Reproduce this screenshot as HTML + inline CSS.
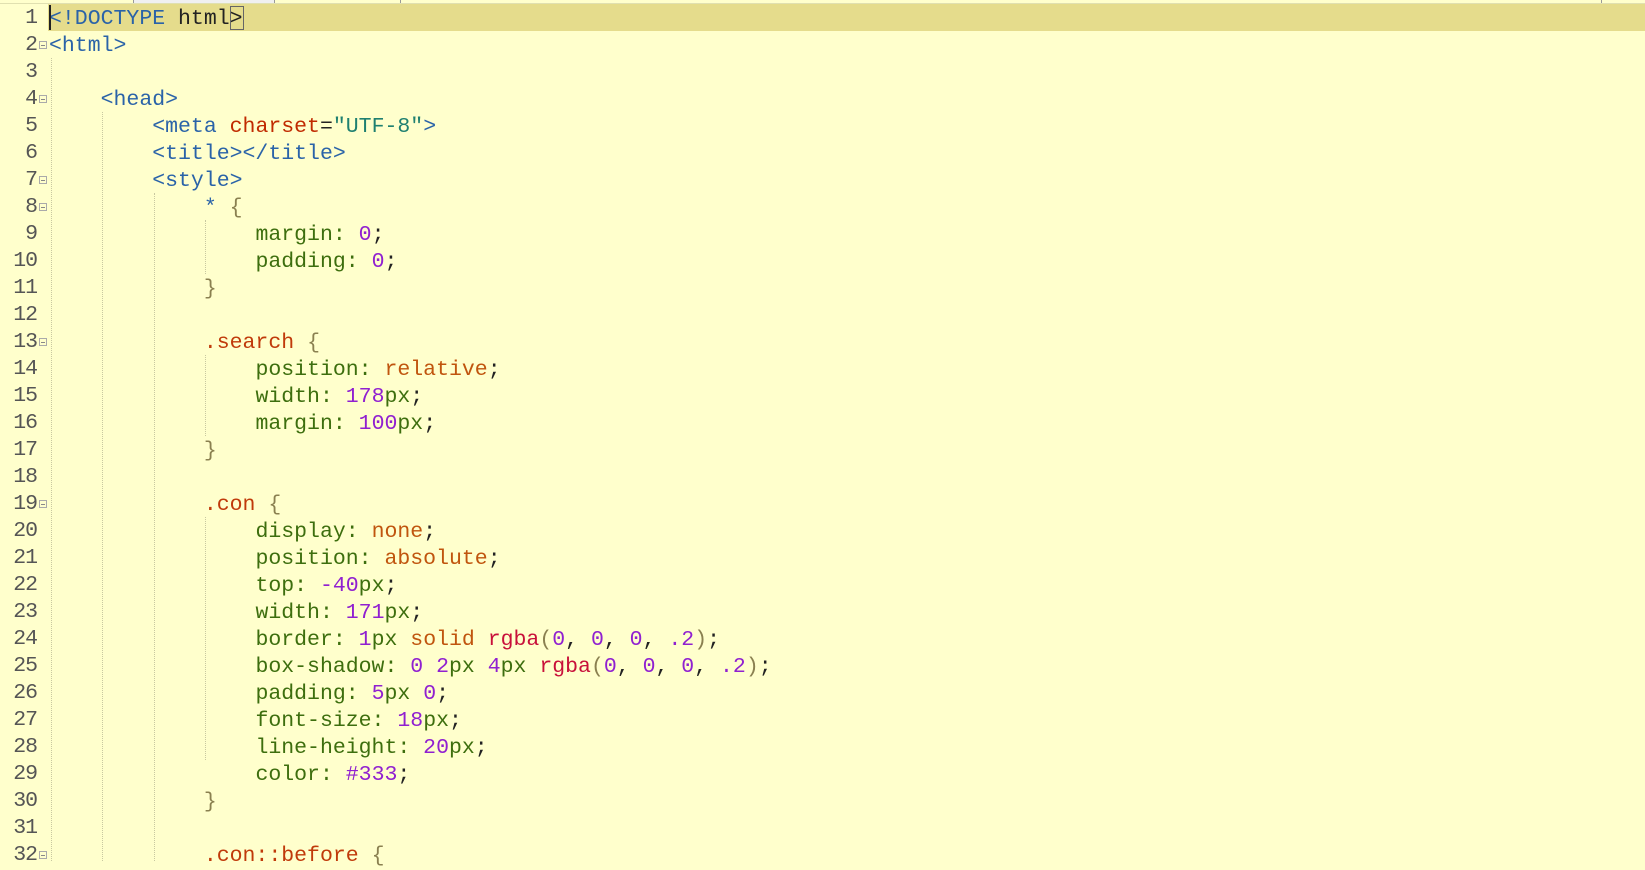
<!DOCTYPE html>
<html><head><meta charset="utf-8"><style>
html,body{margin:0;padding:0;width:1645px;height:861px;overflow:hidden;background:#ffffcc;}
.tabs{position:absolute;left:0;top:0;width:1645px;height:3px;background:#ffffcc;border-bottom:1px solid #e0e0b0;}
.tabs i{position:absolute;top:0;height:3px;border-left:1px solid #999;border-right:1px solid #999;background:#f0f0f0}
.hl{position:absolute;left:48px;top:4px;width:1597px;height:27px;background:#e5dc8c;}
.g{position:absolute;left:0;top:6px;width:48px;}
.g div,.c div{height:27px;line-height:27px;white-space:pre;}
.g div{text-align:right;padding-right:11px;color:#555;font:21.5px "Liberation Mono",monospace;letter-spacing:-1px;position:relative}
.f{position:absolute;right:1px;top:8px;width:8px;height:8px;border:1px solid #aaa;box-sizing:border-box}
.f:after{content:"";position:absolute;left:1px;top:3px;width:4px;height:1px;background:#888}
.c{position:absolute;left:49px;top:6px;font:21.5px "Liberation Mono",monospace;color:#222}
.ig{position:absolute;width:0;border-left:1px dotted #c8c8a0}
.t{color:#2a63a8}.a{color:#c02a00}.s{color:#1f8070}.p{color:#3d6e0e}.n{color:#9020d0}.k{color:#c0550e}.sel{color:#c03a0a}.b{color:#8a8050}.r{color:#c8103a}
.cur{position:absolute;left:49px;top:5px;width:2px;height:25px;background:#222}
.bm{position:absolute;left:230px;top:6px;width:14px;height:24px;border:1px solid #666;box-sizing:border-box}
</style></head><body>
<div class="tabs"><i style="left:133px;width:140px"></i><i style="left:400px;width:1200px;background:#ffffcc"></i></div>
<div class="hl"></div>
<div class="ig" style="left:51px;top:58px;height:803px"></div>
<div class="ig" style="left:102px;top:112px;height:749px"></div>
<div class="ig" style="left:154px;top:193px;height:668px"></div>
<div class="ig" style="left:205px;top:220px;height:54px"></div>
<div class="ig" style="left:205px;top:355px;height:81px"></div>
<div class="ig" style="left:205px;top:517px;height:243px"></div>
<div class="g">
<div>1</div><div>2<span class="f"></span></div><div>3</div><div>4<span class="f"></span></div><div>5</div><div>6</div><div>7<span class="f"></span></div><div>8<span class="f"></span></div><div>9</div><div>10</div><div>11</div><div>12</div><div>13<span class="f"></span></div><div>14</div><div>15</div><div>16</div><div>17</div><div>18</div><div>19<span class="f"></span></div><div>20</div><div>21</div><div>22</div><div>23</div><div>24</div><div>25</div><div>26</div><div>27</div><div>28</div><div>29</div><div>30</div><div>31</div><div>32<span class="f"></span></div>
</div>
<div class="c">
<div><span class="t">&lt;!DOCTYPE</span> html&gt;</div>
<div><span class="t">&lt;html&gt;</span></div>
<div> </div>
<div>    <span class="t">&lt;head&gt;</span></div>
<div>        <span class="t">&lt;meta</span> <span class="a">charset</span>=<span class="s">"UTF-8"</span><span class="t">&gt;</span></div>
<div>        <span class="t">&lt;title&gt;&lt;/title&gt;</span></div>
<div>        <span class="t">&lt;style&gt;</span></div>
<div>            <span class="t">*</span> <span class="b">{</span></div>
<div>                <span class="p">margin:</span> <span class="n">0</span>;</div>
<div>                <span class="p">padding:</span> <span class="n">0</span>;</div>
<div>            <span class="b">}</span></div>
<div> </div>
<div>            <span class="sel">.search</span> <span class="b">{</span></div>
<div>                <span class="p">position:</span> <span class="k">relative</span>;</div>
<div>                <span class="p">width:</span> <span class="n">178</span><span class="p">px</span>;</div>
<div>                <span class="p">margin:</span> <span class="n">100</span><span class="p">px</span>;</div>
<div>            <span class="b">}</span></div>
<div> </div>
<div>            <span class="sel">.con</span> <span class="b">{</span></div>
<div>                <span class="p">display:</span> <span class="k">none</span>;</div>
<div>                <span class="p">position:</span> <span class="k">absolute</span>;</div>
<div>                <span class="p">top:</span> <span class="n">-40</span><span class="p">px</span>;</div>
<div>                <span class="p">width:</span> <span class="n">171</span><span class="p">px</span>;</div>
<div>                <span class="p">border:</span> <span class="n">1</span><span class="p">px</span> <span class="k">solid</span> <span class="r">rgba</span><span class="b">(</span><span class="n">0</span>, <span class="n">0</span>, <span class="n">0</span>, <span class="n">.2</span><span class="b">)</span>;</div>
<div>                <span class="p">box-shadow:</span> <span class="n">0</span> <span class="n">2</span><span class="p">px</span> <span class="n">4</span><span class="p">px</span> <span class="r">rgba</span><span class="b">(</span><span class="n">0</span>, <span class="n">0</span>, <span class="n">0</span>, <span class="n">.2</span><span class="b">)</span>;</div>
<div>                <span class="p">padding:</span> <span class="n">5</span><span class="p">px</span> <span class="n">0</span>;</div>
<div>                <span class="p">font-size:</span> <span class="n">18</span><span class="p">px</span>;</div>
<div>                <span class="p">line-height:</span> <span class="n">20</span><span class="p">px</span>;</div>
<div>                <span class="p">color:</span> <span class="n">#333</span>;</div>
<div>            <span class="b">}</span></div>
<div> </div>
<div>            <span class="sel">.con::before</span> <span class="b">{</span></div>
</div>
<div class="cur"></div>
<div class="bm"></div>
</body></html>
